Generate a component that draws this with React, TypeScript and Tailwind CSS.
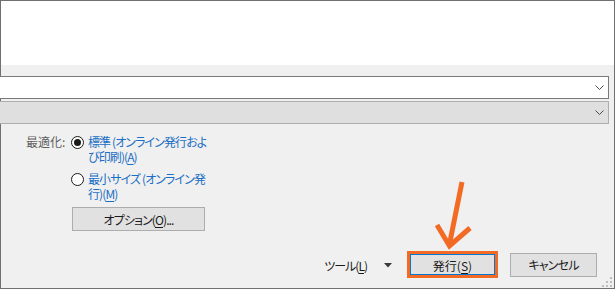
import React from "react";

const Chevron = () => (
  <svg width="9" height="6" viewBox="0 0 9 6" className="block">
    <path d="M0.5 0.5 L4.5 4.5 L8.5 0.5" fill="none" stroke="#4a4a4a" strokeWidth="1" />
  </svg>
);

const U = ({ children }: { children: React.ReactNode }) => (
  <span className="underline underline-offset-2 decoration-1">{children}</span>
);

export default function App() {
  return (
    <div
      className="relative w-[615px] h-[290px] bg-white text-[12px] [font-feature-settings:'palt'] overflow-hidden"
      style={{ fontFamily: '"Noto Sans CJK JP", "Noto Sans", sans-serif' }}
    >
      <div className="h-[289px] w-[615px] border border-[#707070] flex flex-col">
        <div className="h-[64px] bg-white shrink-0" />
        <div className="flex-1 bg-[#f0f0f0] flex flex-col pt-[11px]">
          {/* combobox 1 */}
          <div className="h-[23px] ml-[-2px] mr-[5px] bg-white border border-[#7a7a7a] flex items-center justify-end pr-[4px]">
            <Chevron />
          </div>
          {/* combobox 2 */}
          <div className="h-[23px] mt-[2px] ml-[-2px] mr-[5px] bg-[#dfdfdf] border border-[#adadad] flex items-center justify-end pr-[4px]">
            <Chevron />
          </div>

          {/* optimization */}
          <div className="flex mt-[10px] pl-[25px] leading-[15px]">
            <div className="w-[45px] text-[#5f5f5f]">最適化:</div>
            <div className="flex flex-col">
              <div className="flex">
                <div className="w-[13px] h-[13px] mt-[2px] rounded-full border border-[#1a1a1a] bg-white flex items-center justify-center shrink-0">
                  <div className="w-[7px] h-[7px] rounded-full bg-[#1a1a1a]" />
                </div>
                <div className="ml-[4px] text-[#1a6ec4] tracking-[-0.9px]">
                  <div>標準 (オンライン発行およ</div>
                  <div>
                    び印刷)(<U>A</U>)
                  </div>
                </div>
              </div>
              <div className="flex mt-[7px]">
                <div className="w-[13px] h-[13px] mt-[2px] rounded-full border border-[#1a1a1a] bg-white shrink-0" />
                <div className="ml-[4px] text-[#1a6ec4] tracking-[-0.9px]">
                  <div>最小サイズ (オンライン発</div>
                  <div>
                    行)(<U>M</U>)
                  </div>
                </div>
              </div>
              <div className="ml-[1px] mt-[6px] w-[133px] h-[24px] bg-[#e1e1e1] border border-[#adadad] flex items-center justify-center text-[#1a1a1a] tracking-[-0.9px]">
                オプション(<U>O</U>)...
              </div>
            </div>
          </div>

          <div className="flex-1" />

          {/* bottom row */}
          <div className="flex items-center justify-end pr-[17px] pb-[10px] text-[#1a1a1a]">
            <div className="pt-[2px] tracking-[-1px]">
              ツール(<U>L</U>)
            </div>
            <svg width="8" height="5" viewBox="0 0 8 5" className="ml-[17px] mt-[1px]">
              <path d="M0 0 L8 0 L4 4.5 Z" fill="#3a3a3a" />
            </svg>
            <div className="ml-[15px] w-[91px] h-[27px] border-[3px] border-[#f26a24]">
              <div className="w-full h-full border border-[#0078d7] bg-[#e1e1e1] flex items-center justify-center pt-[2px]">
                発行(<U>S</U>)
              </div>
            </div>
            <div className="ml-[12px] w-[87px] h-[24px] bg-[#e1e1e1] border border-[#adadad] flex items-center justify-center pt-[1px] tracking-[-0.8px]">
              キャンセル
            </div>
          </div>
        </div>
      </div>

      {/* resize grip */}
      <svg className="absolute left-[602px] top-[277px]" width="11" height="10" viewBox="0 0 11 10">
        <rect x="8" y="0" width="2" height="2" fill="#bdbdbd" />
        <rect x="4" y="4" width="2" height="2" fill="#bdbdbd" />
        <rect x="8" y="4" width="2" height="2" fill="#bdbdbd" />
        <rect x="0" y="8" width="2" height="2" fill="#bdbdbd" />
        <rect x="4" y="8" width="2" height="2" fill="#bdbdbd" />
        <rect x="8" y="8" width="2" height="2" fill="#bdbdbd" />
      </svg>

      {/* orange arrow */}
      <svg className="absolute left-0 top-0 pointer-events-none" width="615" height="290" viewBox="0 0 615 290">
        <path d="M462 182 L449.5 244" stroke="#f26a24" strokeWidth="5" fill="none" />
        <path d="M437 225 L449.5 246 L470 228" stroke="#f26a24" strokeWidth="5" fill="none" strokeLinejoin="miter" />
      </svg>
    </div>
  );
}
